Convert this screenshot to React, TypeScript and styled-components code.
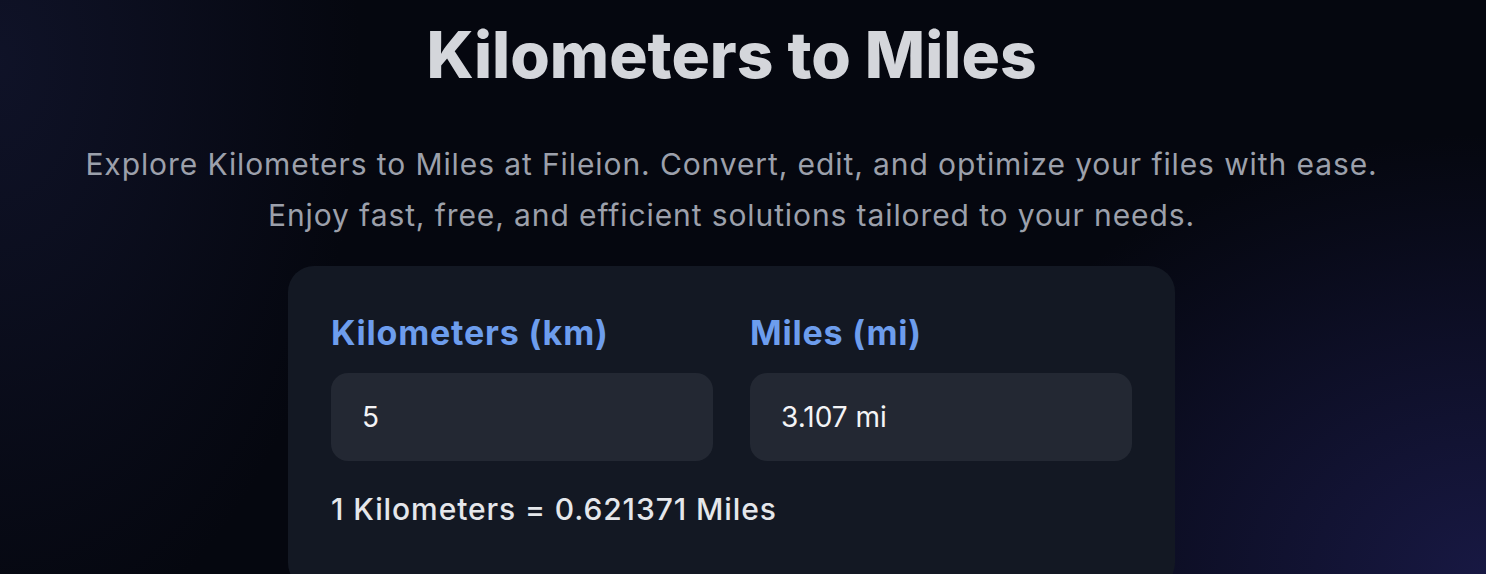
import React from "react";
import styled, { createGlobalStyle } from "styled-components";

const Global = createGlobalStyle`
  html, body { margin: 0; padding: 0; }
  body {
    background: #05070f;
    font-family: Inter, "Noto Sans", sans-serif;
    -webkit-font-smoothing: antialiased;
  }
`;

const Page = styled.main`
  height: 574px;
  overflow: hidden;
  box-sizing: border-box;
  background:
    radial-gradient(ellipse 560px 440px at 1486px 574px, rgba(30, 30, 84, 0.75), rgba(30, 30, 84, 0) 100%),
    radial-gradient(ellipse 360px 600px at 0px 60px, rgba(22, 26, 56, 0.6), rgba(22, 26, 56, 0) 100%),
    #05070f;
  display: flex;
  flex-direction: column;
  align-items: center;
  padding: 16px 23px 0 0;
`;

const Title = styled.h1`
  margin: 0;
  font-size: 64px;
  line-height: 78px;
  font-weight: 800;
  letter-spacing: 0;
  color: #d4d6db;
`;

const Lead = styled.p`
  margin: 45px 0 0;
  white-space: nowrap;
  text-align: center;
  font-size: 30px;
  line-height: 51px;
  font-weight: 400;
  letter-spacing: 0.9px;
  color: #9ca0ab;
`;

const Card = styled.section`
  margin-top: 25px;
  width: 887px;
  box-sizing: border-box;
  padding: 47px 43px 60px;
  background: #131823;
  border-radius: 26px;
`;

const Fields = styled.div`
  display: grid;
  grid-template-columns: 1fr 1fr;
  column-gap: 37px;
`;

const Field = styled.div`
  display: flex;
  flex-direction: column;
`;

const Label = styled.label`
  font-size: 34px;
  line-height: 40px;
  font-weight: 700;
  letter-spacing: 0.8px;
  color: #6d9ded;
  margin-bottom: 20px;
`;

const Box = styled.div`
  height: 88px;
  border-radius: 17px;
  background: #232833;
  display: flex;
  align-items: center;
  padding: 0 31px;
  font-size: 28px;
  font-weight: 400;
  color: #f3f4f6;
`;

const Ratio = styled.p`
  margin: 28px 0 0;
  font-size: 30px;
  line-height: 40px;
  font-weight: 500;
  letter-spacing: 0.9px;
  color: #e5e7eb;
`;

export default function App() {
  return (
    <>
      <Global />
      <Page>
        <Title>Kilometers to Miles</Title>
        <Lead>
          Explore Kilometers to Miles at Fileion. Convert, edit, and optimize your files with ease.
          <br />
          Enjoy fast, free, and efficient solutions tailored to your needs.
        </Lead>
        <Card>
          <Fields>
            <Field>
              <Label>Kilometers (km)</Label>
              <Box>5</Box>
            </Field>
            <Field>
              <Label>Miles (mi)</Label>
              <Box>3.107 mi</Box>
            </Field>
          </Fields>
          <Ratio>1 Kilometers = 0.621371 Miles</Ratio>
        </Card>
      </Page>
    </>
  );
}
